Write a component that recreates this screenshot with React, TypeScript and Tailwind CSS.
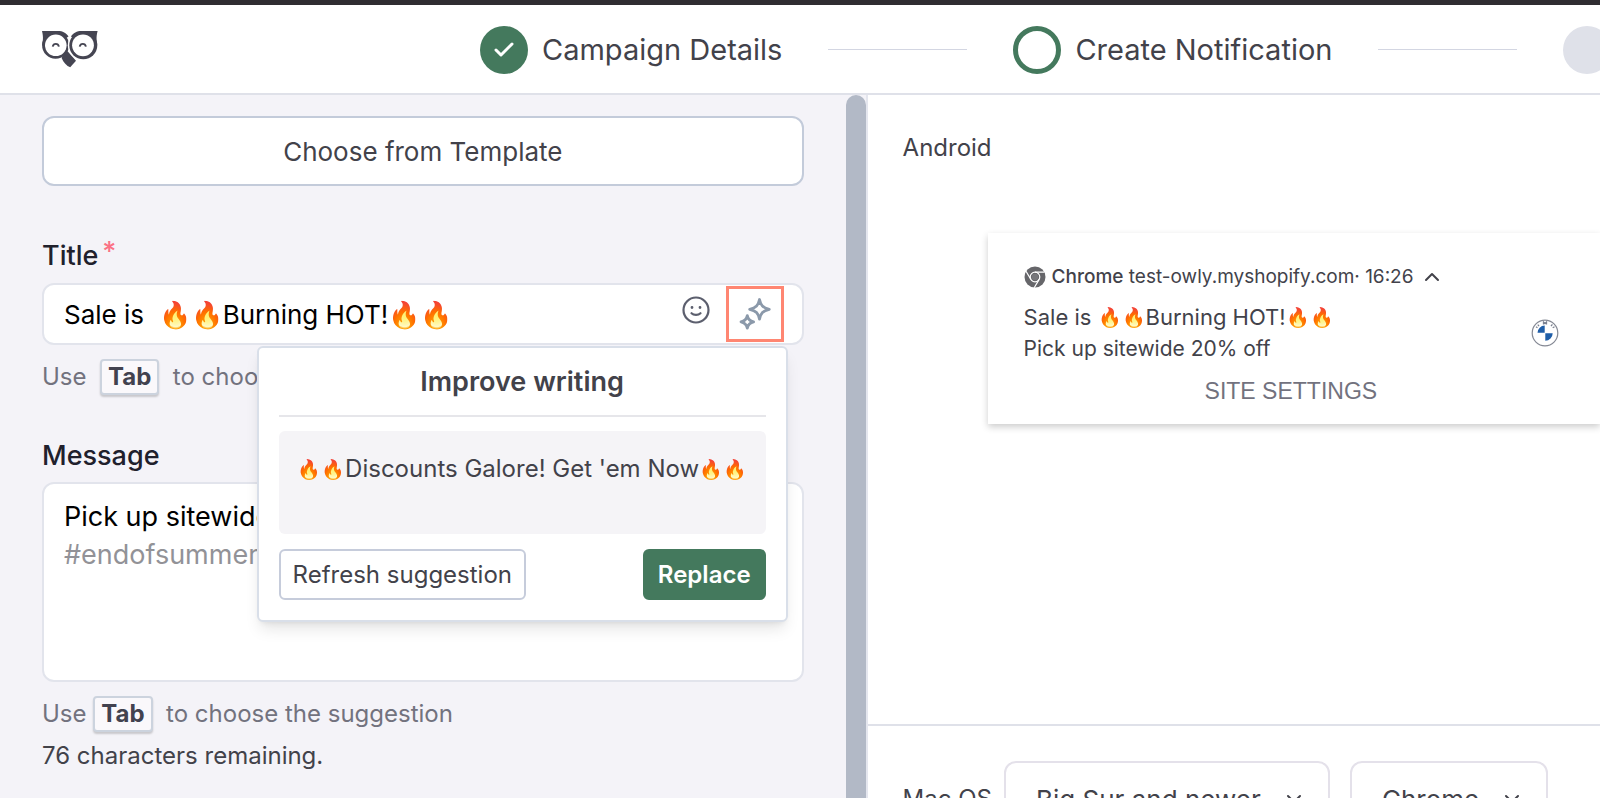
import { useState } from "react";
import { Check, ChevronDown, ChevronUp } from "lucide-react";

const OwlLogo = () => (
  <svg viewBox="0 0 56 37" className="h-[37px] w-14" role="img" aria-label="Owly">
    <path d="M0 0h16c4.500 0 8.500 2 10.500 5.500L14 14 .2 14C.6 10.500 1.800 7 0 0z" fill="#454552" />
    <circle cx="13.600" cy="14.300" r="13.500" fill="#454552" />
    <path d="M24 18.500l10 11.200-5.800 6.600c-3.700-1.300-6.600-4.800-8.600-9.300z" fill="#454552" />
    <circle cx="13.800" cy="14.300" r="10.800" fill="#fff" />
    <circle cx="41" cy="14.300" r="15.200" fill="#fff" />
    <path d="M55.600 0H39.500c-4.500 0-8.500 2-10.500 5.500L41 14h14.200c-.2-3.500-1.500-7 .4-14z" fill="#454552" />
    <circle cx="41.300" cy="14.300" r="14" fill="#454552" />
    <circle cx="41" cy="14.300" r="10.900" fill="#fff" />
    <path
      d="M10.700 15.600c.8-3.600 5.400-3.600 6.200 0M37.700 15.600c.8-3.600 5.400-3.600 6.200 0"
      fill="none"
      stroke="#454552"
      strokeWidth="1.900"
    />
  </svg>
);

const SmileIcon = () => (
  <svg viewBox="0 0 28 28" className="size-7" fill="none" stroke="#5c5f6e" strokeWidth="2.200" strokeLinecap="round">
    <circle cx="14" cy="14" r="12.500" />
    <path d="M9.500 17.200c2.200 2.200 6.800 2.200 9 0" />
    <path d="M10 11.500h.01M18 11.500h.01" strokeWidth="2.800" />
  </svg>
);

const SparklesIcon = () => (
  <svg viewBox="0 0 32 32" className="size-8" fill="none" stroke="#8b99aa" strokeWidth="2.800" strokeLinejoin="round">
    <path d="M20.500 1.500c1.200 5.800 3.400 8.300 9.800 9.800-6.400 1.500-8.600 4-9.800 9.800-1.200-5.800-3.400-8.300-9.800-9.800 6.400-1.500 8.600-4 9.800-9.800z" />
    <path d="M8.300 17.600c.8 3.800 2.300 5.400 6.300 6.300-4 .9-5.500 2.500-6.300 6.300-.8-3.800-2.300-5.400-6.300-6.300 4-.9 5.500-2.500 6.300-6.300z" />
  </svg>
);

const ChromeIcon = () => (
  <svg viewBox="0 0 22 22" className="size-[22px]">
    <circle cx="11" cy="11" r="10.500" fill="#66666a" />
    <g fill="none" stroke="#fff" strokeWidth="1.200">
      <circle cx="11" cy="11" r="4.800" />
      <path d="M11 6.200h9.500M6.900 13.400L2 5.300M15.200 13.400l-5 8.300" />
    </g>
    <circle cx="11" cy="11" r="3.300" fill="#77777b" />
  </svg>
);

const BrandBadge = () => (
  <svg viewBox="0 0 28 28" className="size-7" role="img" aria-label="BMW">
    <circle cx="14" cy="14" r="12.800" fill="#fff" stroke="#858994" strokeWidth="1.200" />
    <path d="M13.700 13.700V6.500a7.500 7.500 0 0 0-7.200 7.200zM14.300 14.300v7.400a7.500 7.500 0 0 0 7.400-7.400z" fill="#1f5ea8" />
    <path d="M5 7.800l1.500 1M6.800 5.600l1.200 1.500M12.500 5.500V3l1.500 1.500L15.500 3v2.500M20 7.200l1.400-1.800M21.700 8.800l1.800-1" fill="none" stroke="#7c8291" strokeWidth="1.300" />
  </svg>
);

const Fire = () => <span className="align-[1px] text-[19px] leading-8">🔥🔥</span>;

const Tab = () => (
  <kbd className="rounded border-2 border-[#ccd3de] bg-[#faf8fb] px-1.5 font-[Inter] text-2xl leading-8 font-bold text-[#42424f] shadow-[0_2px_2px_rgba(0,0,0,0.18)]">
    Tab
  </kbd>
);

const StepLine = () => <div className="h-px w-[139px] shrink-0 bg-[#d3d6e2]" />;

export default function App() {
  const [title, setTitle] = useState("Sale is  🔥🔥Burning HOT!🔥🔥");
  const [message, setMessage] = useState("Pick up sitewide 20% off");

  return (
    <div className="flex h-screen flex-col overflow-hidden bg-white font-[Inter,sans-serif] text-[#42424a]">
      <header className="flex h-[95px] shrink-0 items-center border-t-[5px] border-b-2 border-t-[#2f2d31] border-b-[#dfe1e9] pt-px pl-[42px]">
        <a href="#">
          <OwlLogo />
        </a>
        <ol className="ml-[382px] flex shrink-0 items-center gap-[46px] text-[29px] whitespace-nowrap">
          <li className="flex items-center gap-3.5">
            <span className="flex size-12 items-center justify-center rounded-full bg-[#44795d]">
              <Check className="size-6 text-white" strokeWidth={3} />
            </span>
            Campaign Details
          </li>
          <StepLine />
          <li className="flex items-center gap-3.5">
            <span className="size-12 rounded-full border-[5px] border-[#44795d]" />
            Create Notification
          </li>
          <StepLine />
          <li className="size-12 rounded-full bg-[#dfe1e9]" />
        </ol>
      </header>

      <div className="flex min-h-0 flex-1">
        <section className="flex w-[54.1%] bg-[#f4f3f8]">
          <form className="min-w-0 flex-1 px-[42px] pt-[21px]">
            <button type="button" className="h-[70px] w-full rounded-xl border-2 border-[#c3cbda] bg-white text-[26px]">
              Choose from Template
            </button>

            <label htmlFor="title" className="mt-[52px] flex h-[45px] gap-1 text-[27px] leading-9 font-medium text-[#20202c]">
              Title
              <span className="text-[#fb7185] leading-7">*</span>
            </label>
            <div className="relative flex h-[62px] items-center rounded-xl border-2 border-[#e2e4ec] bg-white pr-[18px] pl-5">
              <input
                id="title"
                value={title}
                onChange={(e) => setTitle(e.target.value)}
                className="min-w-0 flex-1 text-[26px] text-black outline-none"
              />
              <button type="button" aria-label="Insert emoji" className="mr-4 mb-2">
                <SmileIcon />
              </button>
              <button type="button" aria-label="Improve writing" className="flex h-14 w-[58px] items-center justify-center border-[3px] border-[#ff8672]">
                <SparklesIcon />
              </button>

              <div className="absolute top-[61px] right-3.5 z-10 w-[531px] rounded-md border-2 border-[#d9dfe9] bg-white px-5 pb-5 shadow-lg">
                <h2 className="h-[69px] border-b-2 border-[#e6e6ea] pt-4 text-center text-[27px] leading-9 font-semibold">
                  Improve writing
                </h2>
                <p className="mt-3.5 flex h-[103px] items-start justify-center rounded-md bg-[#f5f4f7] pt-5 text-2xl leading-9">
                  <span className="whitespace-nowrap">
                    <Fire />
                    Discounts Galore! Get 'em Now
                    <Fire />
                  </span>
                </p>
                <div className="mt-[15px] flex justify-between text-2xl">
                  <button type="button" className="h-[51px] rounded-md border-2 border-[#c6ccdb] px-3">
                    Refresh suggestion
                  </button>
                  <button type="button" className="h-[51px] rounded-md bg-[#44795d] px-[15px] font-semibold text-white">
                    Replace
                  </button>
                </div>
              </div>
            </div>
            <p className="mt-3.5 flex h-9 items-center text-2xl whitespace-pre text-[#72727e]">
              Use  <Tab />  to choose the suggestion
            </p>

            <label htmlFor="message" className="mt-[43px] block h-11 text-[27px] leading-9 font-medium text-[#20202c]">
              Message
            </label>
            <div className="relative h-[200px] rounded-xl border-2 border-[#e2e4ec] bg-white">
              <textarea
                id="message"
                value={message}
                onChange={(e) => setMessage(e.target.value)}
                className="block size-full resize-none px-5 py-3.5 text-[27px] leading-[38px] text-black outline-none"
              />
              <span className="pointer-events-none absolute top-[52px] left-5 text-[27px] leading-[38px] text-[#929297]">
                #endofsummer
              </span>
            </div>
            <p className="mt-3.5 flex h-9 items-center text-2xl whitespace-pre text-[#72727e]">
              Use <Tab />  to choose the suggestion
            </p>
            <p className="mt-1.5 text-2xl leading-9">76 characters remaining.</p>
          </form>
          <div className="-mb-5 w-5 shrink-0 rounded-full bg-[#b2b9c6]" />
        </section>

        <section className="flex min-w-0 flex-1 flex-col border-l-2 border-[#e4e6ee]">
          <div className="h-[631px] shrink-0 border-b-2 border-[#dfe1e9] pt-[35px] pl-[35px]">
            <h3 className="text-2xl leading-9">Android</h3>
            <article className="mt-[67px] ml-[85px] flex h-[191px] pt-7 pl-9 shadow-[0_3px_7px_rgba(0,0,0,0.2)]">
              <div className="min-w-0 flex-1 text-[22px] leading-8 whitespace-nowrap">
                <p className="flex items-center gap-1.5 text-[19px]">
                  <ChromeIcon />
                  <span>
                    <span className="font-medium">Chrome</span> test-owly.myshopify.com· 16:26
                  </span>
                  <ChevronUp className="size-6" />
                </p>
                <p className="mt-2 h-8">
                  Sale is <Fire />
                  Burning HOT!
                  <Fire />
                </p>
                <p className="text-[21px]">Pick up sitewide 20% off</p>
                <button type="button" className="mt-2.5 ml-[181px] block font-['Liberation_Sans'] text-[23px] leading-8 text-[#72727e]">
                  SITE SETTINGS
                </button>
              </div>
              <div className="mt-[58px] mr-[41px]">
                <BrandBadge />
              </div>
            </article>
          </div>

          <div className="flex shrink-0 items-center gap-5 pt-[35px] pl-[35px] whitespace-nowrap">
            <label htmlFor="os" className="-mr-2 text-2xl">
              Mac OS
            </label>
            <div className="relative">
              <select id="os" className="h-[76px] w-[326px] appearance-none rounded-xl border-2 border-[#e4e1ea] px-[30px] text-[26px]">
                <option>Big Sur and newer</option>
              </select>
              <ChevronDown className="pointer-events-none absolute top-[26px] right-6 size-6" />
            </div>
            <div className="relative">
              <select aria-label="Browser" className="h-[76px] w-[198px] appearance-none rounded-xl border-2 border-[#e4e1ea] px-[30px] text-[26px]">
                <option>Chrome</option>
              </select>
              <ChevronDown className="pointer-events-none absolute top-[26px] right-6 size-6" />
            </div>
          </div>
        </section>
      </div>
    </div>
  );
}
